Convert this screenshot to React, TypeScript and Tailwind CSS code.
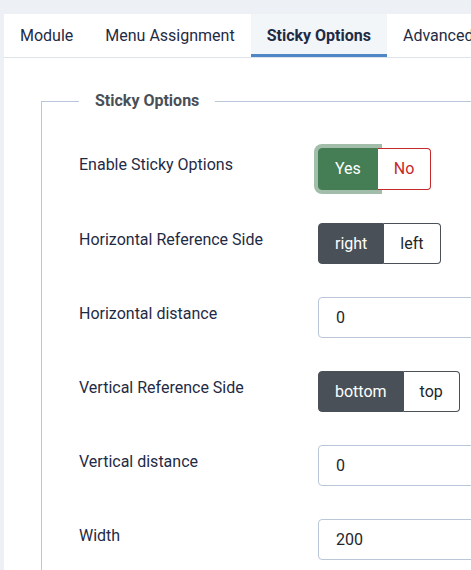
import React from 'react'

const tabs = ['Module', 'Menu Assignment', 'Sticky Options', 'Advanced']

function Segmented({
  options,
  active,
}: {
  options: string[]
  active: number
}) {
  return (
    <div className="flex h-[41px]">
      {options.map((o, i) => {
        const first = i === 0
        const last = i === options.length - 1
        const on = i === active
        return (
          <div
            key={o}
            className={[
              'flex items-center px-4 border text-[16px]',
              first ? 'rounded-l-[4px]' : '',
              last ? 'rounded-r-[4px]' : '',
              on
                ? 'bg-[#495057] border-[#495057] text-white'
                : 'bg-white border-[#495057] text-[#22262a] border-l-0',
            ].join(' ')}
          >
            {o}
          </div>
        )
      })}
    </div>
  )
}

function YesNo() {
  return (
    <div className="flex h-[42px]">
      <div className="flex items-center px-4 rounded-l-[4px] bg-[#457e55] border border-[#457e55] text-white text-[16px] shadow-[0_0_0_4px_rgba(69,126,85,0.5)]">
        Yes
      </div>
      <div className="flex items-center px-4 rounded-r-[4px] bg-white border border-l-0 border-[#c52a2a] text-[#c52a2a] text-[16px]">
        No
      </div>
    </div>
  )
}

function TextInput({ value }: { value: string }) {
  return (
    <div className="flex items-center h-[41px] w-[240px] pl-[17px] border border-[#b9c7d8] rounded-[4px] bg-white text-[16px] text-[#22262a]">
      {value}
    </div>
  )
}

function Row({ label, children }: { label: string; children: React.ReactNode }) {
  return (
    <div className="flex items-start">
      <div className="w-[239px] pt-[5px] text-[16px] leading-6 text-[#1f2b45]">
        {label}
      </div>
      <div>{children}</div>
    </div>
  )
}

export default function App() {
  return (
    <div
      className="w-[471px] h-[570px] overflow-hidden bg-[#edf1f6] pt-[14px] pl-[4px]"
      style={{ fontFamily: 'Roboto, "Noto Sans", sans-serif' }}
    >
      <div className="bg-white w-[600px] h-[600px]">
        <div className="flex border-b border-[#dde3ea]">
          {tabs.map((t) => {
            const active = t === 'Sticky Options'
            return (
              <div
                key={t}
                className={[
                  'h-[43px] px-4 flex items-center pt-[3px] border-b-[3px] text-[16px] whitespace-nowrap text-[#1f2b45]',
                  active
                    ? 'bg-[#f3f6f9] border-[#4f86c6] font-bold'
                    : 'border-transparent',
                ].join(' ')}
              >
                {t}
              </div>
            )
          })}
        </div>

        <div className="pt-[31px] pl-[37px]">
          <fieldset className="border border-[#b9c7d8] pl-[37px] pb-10">
            <legend className="px-4 text-[16px] leading-6 font-bold text-[#4a4f57]">
              Sticky Options
            </legend>
            <div className="pt-[35px] flex flex-col gap-[33px]">
              <Row label="Enable Sticky Options">
                <YesNo />
              </Row>
              <Row label="Horizontal Reference Side">
                <Segmented options={['right', 'left']} active={0} />
              </Row>
              <Row label="Horizontal distance">
                <TextInput value="0" />
              </Row>
              <Row label="Vertical Reference Side">
                <Segmented options={['bottom', 'top']} active={0} />
              </Row>
              <Row label="Vertical distance">
                <TextInput value="0" />
              </Row>
              <Row label="Width">
                <TextInput value="200" />
              </Row>
            </div>
          </fieldset>
        </div>
      </div>
    </div>
  )
}
